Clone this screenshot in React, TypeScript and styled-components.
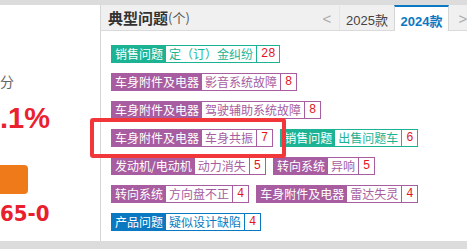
import styled, { createGlobalStyle } from 'styled-components'

const GlobalStyle = createGlobalStyle`
  html, body {
    margin: 0;
    padding: 0;
    background: #dcdcdc;
    overflow: hidden;
  }
  body {
    font-family: 'Liberation Sans', 'Noto Sans CJK SC', sans-serif;
  }
`

const tones = {
  green: '#1cb394',
  purple: '#a75d9f',
  blue: '#0b79c1',
}

type Tone = keyof typeof tones

const Page = styled.div`
  position: relative;
  width: 467px;
  height: 249px;
  padding-top: 5px;
  box-sizing: border-box;
  display: flex;
  align-items: flex-start;
`

const LeftPanel = styled.div`
  flex: none;
  width: 100px;
  height: 236px;
  background: #fff;
  border-right: 1px solid #d6d6d6;
  overflow: hidden;
  display: flex;
  flex-direction: column;
  align-items: flex-start;
`

const ScoreUnit = styled.div`
  margin-top: 66px;
  font-family: 'Noto Sans CJK SC', sans-serif;
  font-size: 14px;
  line-height: 20px;
  color: #666;
`

const Rate = styled.div`
  margin-top: 12.5px;
  font-size: 29px;
  line-height: 29px;
  font-weight: bold;
  color: #ea2230;
`

const OrangeButton = styled.div`
  margin-top: 32.5px;
  margin-left: -20px;
  width: 48px;
  height: 29px;
  border-radius: 4px;
  background: #ef7a19;
`

const Price = styled.div`
  margin-top: 9.4px;
  font-family: 'Liberation Sans Narrow', 'DejaVu Sans Condensed', sans-serif;
  font-size: 22px;
  line-height: 22px;
  font-weight: bold;
  color: #e8202c;
`

const RightPanel = styled.div`
  flex: none;
  width: 376px;
  height: 236px;
  background: #fff;
`

const Header = styled.div`
  height: 25px;
  background: #f0f0f0;
  border-bottom: 1px solid #dadada;
  display: flex;
  align-items: stretch;
`

const Title = styled.div`
  padding-left: 7px;
  display: flex;
  align-items: center;
  font-family: 'Noto Sans CJK SC', sans-serif;
  font-size: 15px;
  font-weight: bold;
  color: #333;

  small {
    font-size: 13px;
    font-weight: normal;
    color: #555;
  }
`

const Tabs = styled.div`
  margin-left: auto;
  display: flex;
  align-items: stretch;
`

const Arrow = styled.div<{ $w: number }>`
  width: ${({ $w }) => $w}px;
  display: flex;
  align-items: center;
  justify-content: center;
  padding-top: 2px;
  font-size: 15px;
  color: #aaa;
`

const Tab = styled.div<{ $active?: boolean }>`
  width: 55px;
  box-sizing: border-box;
  display: flex;
  align-items: center;
  justify-content: center;
  font-size: 13px;
  padding-top: 2px;
  color: ${({ $active }) => ($active ? '#0b79c1' : '#444')};
  font-weight: ${({ $active }) => ($active ? 'bold' : 'normal')};
  background: ${({ $active }) => ($active ? '#fff' : 'transparent')};
  border-left: 1px solid ${({ $active }) => ($active ? '#d6d6d6' : '#e4e4e4')};
  border-right: ${({ $active }) => ($active ? '1px solid #d6d6d6' : 'none')};
  border-top: 2px solid ${({ $active }) => ($active ? '#0b79c1' : 'transparent')};
  margin-bottom: ${({ $active }) => ($active ? '-1px' : '0')};
`

const TagList = styled.div`
  padding: 14px 0 0 10px;
  width: 356px;
  display: flex;
  flex-wrap: wrap;
  row-gap: 10px;
  column-gap: 7px;
`

const Tag = styled.div<{ $tone: Tone }>`
  height: 18px;
  box-sizing: border-box;
  display: flex;
  border: 1px solid ${({ $tone }) => tones[$tone]};
  font-family: 'Noto Sans CJK SC', sans-serif;
  font-size: 12px;
  line-height: 16px;
  white-space: nowrap;
`

const Category = styled.span<{ $tone: Tone }>`
  padding: 0 3px;
  background: ${({ $tone }) => tones[$tone]};
  color: #fff;
`

const Problem = styled.span<{ $tone: Tone }>`
  padding: 0 3px;
  color: ${({ $tone }) => tones[$tone]};
  border-right: 1px solid ${({ $tone }) => tones[$tone]};
`

const Count = styled.span`
  padding: 0 4px;
  font-family: 'Liberation Mono', monospace;
  color: #e4141c;
`

const Marker = styled.div`
  position: absolute;
  left: 90px;
  top: 117.5px;
  width: 196px;
  height: 40.5px;
  box-sizing: border-box;
  border: 4px solid #f2373b;
  border-radius: 3px;
  pointer-events: none;
`

const issues: { cat: string; val: string; n: number; tone: Tone }[] = [
  { cat: '销售问题', val: '定（订）金纠纷', n: 28, tone: 'green' },
  { cat: '车身附件及电器', val: '影音系统故障', n: 8, tone: 'purple' },
  { cat: '车身附件及电器', val: '驾驶辅助系统故障', n: 8, tone: 'purple' },
  { cat: '车身附件及电器', val: '车身共振', n: 7, tone: 'purple' },
  { cat: '销售问题', val: '出售问题车', n: 6, tone: 'green' },
  { cat: '发动机/电动机', val: '动力消失', n: 5, tone: 'purple' },
  { cat: '转向系统', val: '异响', n: 5, tone: 'purple' },
  { cat: '转向系统', val: '方向盘不正', n: 4, tone: 'purple' },
  { cat: '车身附件及电器', val: '雷达失灵', n: 4, tone: 'purple' },
  { cat: '产品问题', val: '疑似设计缺陷', n: 4, tone: 'blue' },
]

const App = () => {
  return (
    <Page>
      <GlobalStyle />
      <LeftPanel>
        <ScoreUnit>分</ScoreUnit>
        <Rate>.1%</Rate>
        <OrangeButton />
        <Price>65-0</Price>
      </LeftPanel>
      <RightPanel>
        <Header>
          <Title>
            典型问题<small>(个)</small>
          </Title>
          <Tabs>
            <Arrow $w={24}>&lt;</Arrow>
            <Tab>2025款</Tab>
            <Tab $active>2024款</Tab>
            <Arrow $w={28}>&gt;</Arrow>
          </Tabs>
        </Header>
        <TagList>
          {issues.map((item, i) => (
            <Tag key={i} $tone={item.tone}>
              <Category $tone={item.tone}>{item.cat}</Category>
              <Problem $tone={item.tone}>{item.val}</Problem>
              <Count>{item.n}</Count>
            </Tag>
          ))}
        </TagList>
      </RightPanel>
      <Marker />
    </Page>
  )
}

export default App
